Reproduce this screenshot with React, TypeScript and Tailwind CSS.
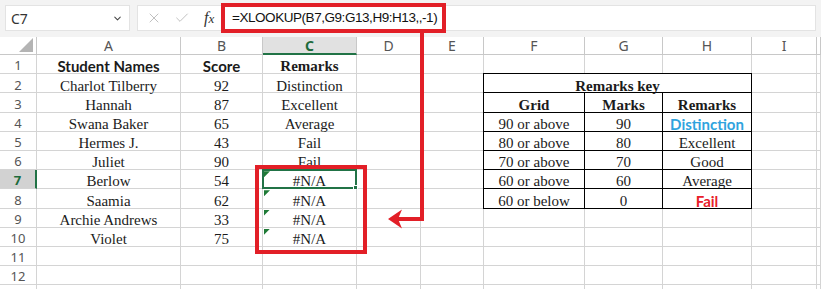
import { X, Check, ChevronDown } from "lucide-react";

const serif = "font-['Liberation_Serif',serif]";
const sans = "font-['Lato','Liberation_Sans',sans-serif]";
const ui = "font-['Noto_Sans','Liberation_Sans',sans-serif]";

const cols = ["A", "B", "C", "D", "E", "F", "G", "H", "I", "J"];

const students: Array<[string, string, string]> = [
  ["Charlot Tilberry", "92", "Distinction"],
  ["Hannah", "87", "Excellent"],
  ["Swana Baker", "65", "Average"],
  ["Hermes J.", "43", "Fail"],
  ["Juliet", "90", "Fail"],
  ["Berlow", "54", "#N/A"],
  ["Saamia", "62", "#N/A"],
  ["Archie Andrews", "33", "#N/A"],
  ["Violet", "75", "#N/A"],
];

const keyRows: Array<[string, string, string]> = [
  ["90 or above", "90", "Distinction"],
  ["80 or above", "80", "Excellent"],
  ["70 or above", "70", "Good"],
  ["60 or above", "60", "Average"],
  ["60 or below", "0", "Fail"],
];

const cell = "border-r border-b border-[#d4d4d4] flex items-center justify-center pt-[5px] text-[15px] text-[#1b1b1b] whitespace-nowrap";
const keyCell = "border-r border-b border-black flex items-center justify-center pt-[5px] text-[15px] text-[#1b1b1b] whitespace-nowrap";

function ErrorFlag() {
  return <span className="absolute left-px top-px h-[6px] w-[6px] bg-[#1e7a36] [clip-path:polygon(0_0,100%_0,0_100%)]" />;
}

function KeyRemark({ text }: { text: string }) {
  if (text === "Distinction") return <span className={`${sans} font-bold text-[#2fa3de]`}>{text}</span>;
  if (text === "Fail") return <span className={`${sans} font-bold text-[#e8202a]`}>{text}</span>;
  return <span className={serif}>{text}</span>;
}

function SheetRow({ r }: { r: number }) {
  const active = r === 7;
  const s = r >= 2 && r <= 10 ? students[r - 2] : null;
  return (
    <>
      <div
        className={`flex items-center justify-center border-b border-[#d4d4d4] pt-[4px] text-[13px] ${ui} ${
          active ? "bg-[#d2d2d2] font-bold text-[#1d6b3c] border-r-2 border-r-[#217346]" : "border-r text-[#555] bg-white"
        }`}
      >
        {r < 13 ? r : ""}
      </div>
      {r === 1 ? (
        <>
          <div className={`${cell} ${sans} font-bold`}>Student Names</div>
          <div className={`${cell} ${sans} font-bold`}>Score</div>
          <div className={`${cell} ${serif} font-bold`}>Remarks</div>
        </>
      ) : (
        <>
          <div className={`${cell} ${serif}`}>{s?.[0]}</div>
          <div className={`${cell} ${serif}`}>{s?.[1]}</div>
          <div className={`${cell} ${serif} relative`}>
            {s?.[2]}
            {s && s[2] === "#N/A" && <ErrorFlag />}
            {active && (
              <span className="absolute -left-px -top-px -right-px -bottom-px border-2 border-[#217346]">
                <span className="absolute -right-[3px] -bottom-[3px] h-[5px] w-[5px] bg-[#217346] border border-white" />
              </span>
            )}
          </div>
        </>
      )}
      <div className={cell} />
      <div className={cell} />
      {r === 2 ? (
        <div className={`${keyCell} col-span-3 -ml-px -mt-px border-l border-t ${serif} font-bold`}>Remarks key</div>
      ) : r === 3 ? (
        <>
          <div className={`${keyCell} -ml-px border-l ${serif} font-bold`}>Grid</div>
          <div className={`${keyCell} ${serif} font-bold`}>Marks</div>
          <div className={`${keyCell} ${serif} font-bold`}>Remarks</div>
        </>
      ) : r >= 4 && r <= 8 ? (
        <>
          <div className={`${keyCell} -ml-px border-l ${serif}`}>{keyRows[r - 4][0]}</div>
          <div className={`${keyCell} ${serif}`}>{keyRows[r - 4][1]}</div>
          <div className={keyCell}>
            <KeyRemark text={keyRows[r - 4][2]} />
          </div>
        </>
      ) : (
        <>
          <div className={cell} />
          <div className={cell} />
          <div className={cell} />
        </>
      )}
      <div className={cell} />
      <div className={cell} />
    </>
  );
}

export default function App() {
  return (
    <div className="relative h-[289px] w-[821px] overflow-hidden bg-white">
      {/* formula bar */}
      <div className="flex h-[37px] gap-[7px] bg-[#f3f3f3] px-[5px] pt-[5px] pb-[6px]">
        <div className={`flex w-[125px] items-center justify-between border border-[#e3e3e3] bg-white pl-[5px] pr-[6px] text-[14px] text-[#333] ${ui}`}>
          <span>C7</span>
          <ChevronDown className="h-[11px] w-[11px] text-[#444]" strokeWidth={2.2} />
        </div>
        <div className="flex flex-1 items-center border border-[#e3e3e3] bg-white">
          <div className="flex w-[84px] items-center pl-[8px] text-[#a0a0a0]">
            <X className="h-[16px] w-[16px]" strokeWidth={1} />
            <Check className="ml-[12px] h-[16px] w-[16px]" strokeWidth={1} />
            <span className="ml-[14px] font-['Liberation_Serif',serif] text-[16px] italic text-[#333]">
              f<span className="text-[13px]">x</span>
            </span>
          </div>
          <span className="ml-[10px] font-['Liberation_Sans',sans-serif] text-[13.5px] tracking-[-0.45px] text-[#111]">
            =XLOOKUP(B7,G9:G13,H9:H13,,-1)
          </span>
        </div>
      </div>

      {/* sheet */}
      <div className="grid grid-cols-[37px_144px_82px_94px_64px_63px_101px_78px_89px_65px_1fr] grid-rows-[18px_repeat(13,19.2px)]">
        <div className="relative border-r border-b border-[#c8c8c8] bg-white">
          <span className="absolute right-[3px] bottom-[2px] h-[14px] w-[14px] bg-[#b4b4b4] [clip-path:polygon(100%_0,100%_100%,0_100%)]" />
        </div>
        {cols.map((c) =>
          c === "C" ? (
            <div
              key={c}
              className={`flex items-center justify-center border-r border-b-2 border-r-[#c8c8c8] border-b-[#217346] bg-[#e1e1e1] text-[14px] font-bold text-[#1d6b3c] ${ui}`}
            >
              {c}
            </div>
          ) : (
            <div key={c} className={`flex items-center justify-center border-r border-b border-[#c8c8c8] bg-white text-[14px] text-[#555] ${ui}`}>
              {c === "J" ? "" : c}
            </div>
          )
        )}
        {Array.from({ length: 13 }, (_, i) => (
          <SheetRow key={i} r={i + 1} />
        ))}
      </div>

      {/* annotations */}
      <div className="pointer-events-none absolute left-[221px] top-[3px] h-[30px] w-[225px] border-[4px] border-[#e21f27]" />
      <div className="pointer-events-none absolute left-[255px] top-[165px] h-[89px] w-[112px] border-[4px] border-[#e21f27]" />
      <svg className="pointer-events-none absolute left-0 top-0" width="821" height="289" viewBox="0 0 821 289">
        <path d="M422 33 V219 H398" fill="none" stroke="#e21f27" strokeWidth="4" />
        <path d="M388 219 L402 209.5 L398 219 L402 228.5 Z" fill="#e21f27" />
      </svg>
    </div>
  );
}
